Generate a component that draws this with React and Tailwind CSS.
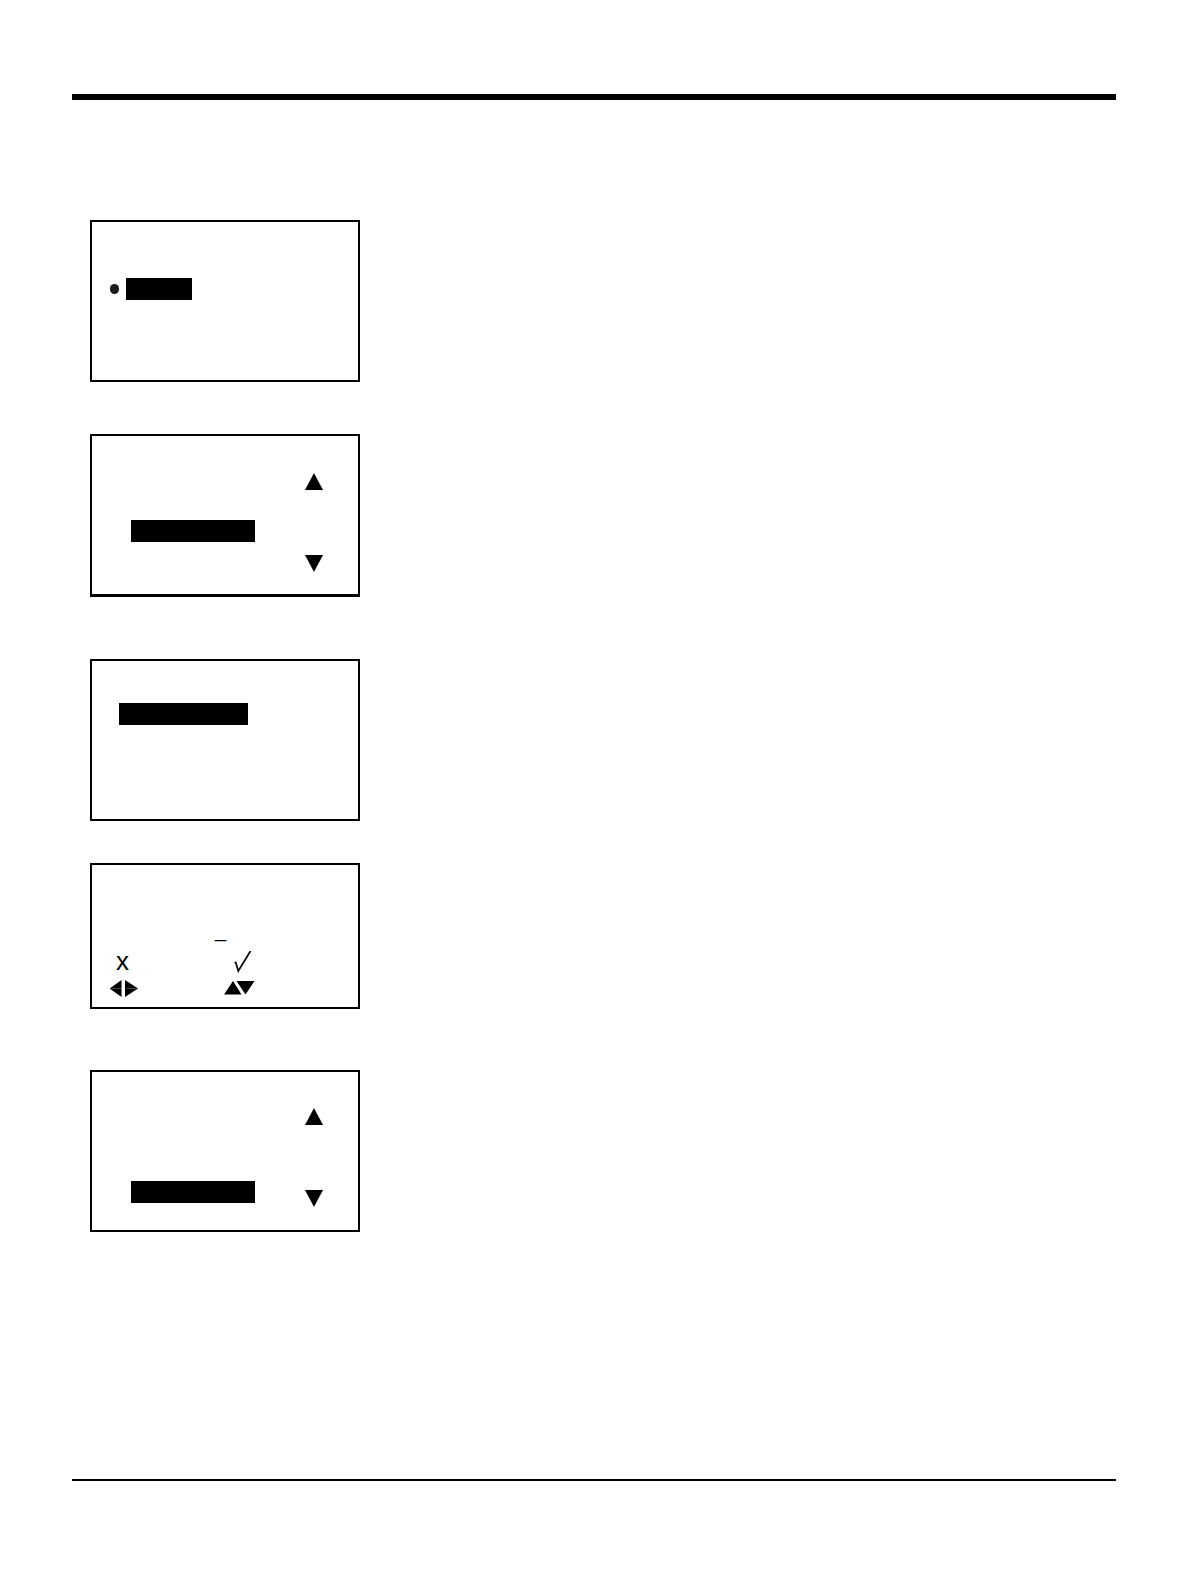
function Screen({ label, className = "", children }) {
  return (
    <section
      aria-label={label}
      className={`flex w-[270px] border-2 border-black bg-white ${className}`}
    >
      {children}
    </section>
  );
}

function Highlight({ className }) {
  return <div className={`h-[22px] bg-black ${className}`} />;
}

function ScrollArrows({ className }) {
  return (
    <div className={`ml-auto mr-[35px] flex flex-col gap-[65px] ${className}`}>
      <svg width="18" height="17" viewBox="0 0 18 17" aria-hidden="true">
        <path d="M9 0 L18 17 H0 Z" />
      </svg>
      <svg width="18" height="17" viewBox="0 0 18 17" aria-hidden="true">
        <path d="M0 0 H18 L9 17 Z" />
      </svg>
    </div>
  );
}

function LeftRightIcon() {
  return (
    <svg width="29" height="17" viewBox="0 0 29 17" aria-hidden="true">
      <path d="M11.5 0 V17 L-0.5 8.5 Z M15 0 V17 L28 8.5 Z" />
      <path d="M2 8.5 H11 M16 8.5 H26" stroke="#444" strokeWidth="1" />
    </svg>
  );
}

function UpDownIcon() {
  return (
    <svg width="31" height="15" viewBox="0 0 31 15" aria-hidden="true">
      <path d="M9 0 L17.5 13.5 H0 Z M12.5 0 H30.5 L21.5 13.5 Z" />
    </svg>
  );
}

function CheckIcon() {
  return (
    <svg width="18" height="22" viewBox="0 0 18 22" fill="none" aria-hidden="true">
      <path d="M0.5 11.5 H1.8 L4.3 20 L16.5 0" stroke="#000" strokeWidth="1.7" />
    </svg>
  );
}

export default function App() {
  return (
    <main className="flex flex-col bg-white pb-[103px] pl-[72px] pr-[75px] pt-[94px] font-['Liberation_Sans',sans-serif] text-black">
      <hr className="h-[6px] border-0 bg-black" />

      <div className="flex flex-col pl-[18px] pt-[120px]">
        <Screen label="Screen 1" className="h-[162px]">
          <div className="mt-14 flex h-[22px] items-center gap-[7px] pl-[18px]">
            <span className="h-[10px] w-[9px] rounded-full bg-[#1c1c1c]" />
            <Highlight className="w-[66px]" />
          </div>
        </Screen>

        <Screen label="Screen 2" className="mt-[52px] h-[163px] border-b-3">
          <Highlight className="ml-[39px] mt-[84px] w-[124px]" />
          <ScrollArrows className="mt-[37px]" />
        </Screen>

        <Screen label="Screen 3" className="mt-[62px] h-[162px]">
          <Highlight className="ml-[27px] mt-[42px] w-[129px]" />
        </Screen>

        <Screen label="Screen 4" className="mt-[42px] h-[146px] flex-col">
          <div className="mt-[55px] pl-[123px] text-[20px] leading-5">_</div>
          <div className="mt-[11px] flex h-[22px] items-center pl-6">
            <span className="w-[118px] pb-[2px] text-[26px] leading-[22px]">x</span>
            <CheckIcon />
          </div>
          <div className="mt-[7px] flex h-[17px] items-center pl-[18px]">
            <div className="w-[114px]">
              <LeftRightIcon />
            </div>
            <UpDownIcon />
          </div>
        </Screen>

        <Screen label="Screen 5" className="mt-[61px] h-[162px]">
          <Highlight className="ml-[39px] mt-[109px] w-[124px]" />
          <ScrollArrows className="mt-[36px]" />
        </Screen>
      </div>

      <hr className="mt-[247px] h-[2px] border-0 bg-black" />
    </main>
  );
}
